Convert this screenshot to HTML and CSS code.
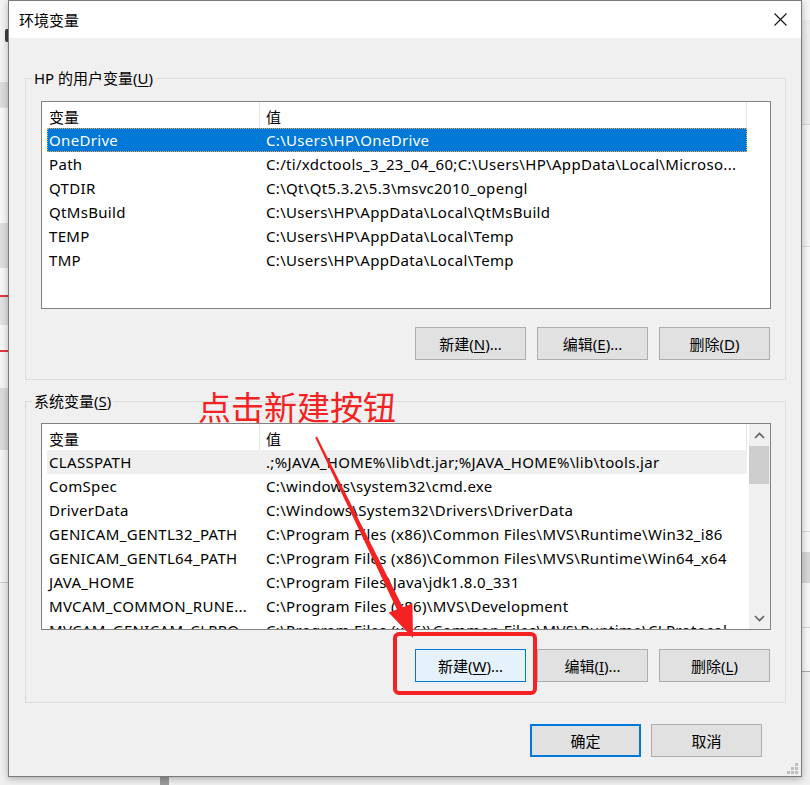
FILE: index.html
```html
<!DOCTYPE html>
<html lang="zh-CN">
<head>
<meta charset="utf-8">
<title>环境变量</title>
<link rel="stylesheet" href="styles.css">
</head>
<body>
<div class="screen">
  <div class="side side-left">
    <div class="sl sl-a"><span class="stub-icon"></span></div>
    <div class="sl sl-b"></div>
    <div class="sl sl-c"></div>
    <div class="sl sl-d"></div>
    <div class="sl sl-e"></div>
    <div class="sl sl-red"></div>
    <div class="sl sl-f"></div>
    <div class="sl sl-g"></div>
    <div class="sl sl-red"></div>
    <div class="sl sl-h"></div>
    <div class="sl sl-i"></div>
    <div class="sl sl-j"></div>
    <div class="sl sl-k"></div>
  </div>

  <div class="center">
    <div class="dialog">
      <div class="titlebar">
        <span class="title">环境变量</span>
        <span class="close">
          <svg width="13" height="13" viewBox="0 0 13 13"><path d="M0.5 0.5 L12.5 12.5 M12.5 0.5 L0.5 12.5" stroke="#111" stroke-width="1.1" fill="none"/></svg>
        </span>
      </div>

      <div class="body">
        <fieldset class="group group-user">
          <legend>HP 的用户变量(<u>U</u>)</legend>
          <div class="list list-user">
            <div class="list-main">
              <div class="list-head">
                <div class="hcol h1">变量</div>
                <div class="hcol h2">值</div>
              </div>
              <div class="row selected"><div class="cell c1">OneDrive</div><div class="cell c2">C:\Users\HP\OneDrive</div></div>
              <div class="row"><div class="cell c1">Path</div><div class="cell c2">C:/ti/xdctools_3_23_04_60;C:\Users\HP\AppData\Local\Microso...</div></div>
              <div class="row"><div class="cell c1">QTDIR</div><div class="cell c2">C:\Qt\Qt5.3.2\5.3\msvc2010_opengl</div></div>
              <div class="row"><div class="cell c1">QtMsBuild</div><div class="cell c2">C:\Users\HP\AppData\Local\QtMsBuild</div></div>
              <div class="row"><div class="cell c1">TEMP</div><div class="cell c2">C:\Users\HP\AppData\Local\Temp</div></div>
              <div class="row"><div class="cell c1">TMP</div><div class="cell c2">C:\Users\HP\AppData\Local\Temp</div></div>
            </div>
          </div>
          <div class="btns">
            <button class="btn">新建(<u>N</u>)...</button>
            <button class="btn">编辑(<u>E</u>)...</button>
            <button class="btn">删除(<u>D</u>)</button>
          </div>
        </fieldset>

        <fieldset class="group group-sys">
          <legend>系统变量(<u>S</u>)</legend>
          <div class="list list-sys">
            <div class="list-main">
              <div class="list-head">
                <div class="hcol h1">变量</div>
                <div class="hcol h2">值</div>
              </div>
              <div class="row hover"><div class="cell c1">CLASSPATH</div><div class="cell c2">.;%JAVA_HOME%\lib\dt.jar;%JAVA_HOME%\lib\tools.jar</div></div>
              <div class="row"><div class="cell c1">ComSpec</div><div class="cell c2">C:\windows\system32\cmd.exe</div></div>
              <div class="row"><div class="cell c1">DriverData</div><div class="cell c2">C:\Windows\System32\Drivers\DriverData</div></div>
              <div class="row"><div class="cell c1">GENICAM_GENTL32_PATH</div><div class="cell c2">C:\Program Files (x86)\Common Files\MVS\Runtime\Win32_i86</div></div>
              <div class="row"><div class="cell c1">GENICAM_GENTL64_PATH</div><div class="cell c2">C:\Program Files (x86)\Common Files\MVS\Runtime\Win64_x64</div></div>
              <div class="row"><div class="cell c1">JAVA_HOME</div><div class="cell c2">C:\Program Files\Java\jdk1.8.0_331</div></div>
              <div class="row"><div class="cell c1">MVCAM_COMMON_RUNE...</div><div class="cell c2">C:\Program Files (x86)\MVS\Development</div></div>
              <div class="row"><div class="cell c1">MVCAM_GENICAM_CLPRO...</div><div class="cell c2">C:\Program Files (x86)\Common Files\MVS\Runtime\CLProtocol</div></div>
            </div>
            <div class="scrollbar">
              <div class="sb-btn">
                <svg width="11" height="7" viewBox="0 0 11 7"><path d="M1 6 L5.5 1.5 L10 6" stroke="#606060" stroke-width="1.6" fill="none"/></svg>
              </div>
              <div class="sb-track"><div class="sb-thumb"></div></div>
              <div class="sb-btn">
                <svg width="11" height="7" viewBox="0 0 11 7"><path d="M1 1 L5.5 5.5 L10 1" stroke="#606060" stroke-width="1.6" fill="none"/></svg>
              </div>
            </div>
          </div>
          <div class="btns">
            <button class="btn btn-hot">新建(<u>W</u>)...</button>
            <button class="btn">编辑(<u>I</u>)...</button>
            <button class="btn">删除(<u>L</u>)</button>
          </div>
        </fieldset>

        <div class="dialog-btns">
          <button class="btn btn-default">确定</button>
          <button class="btn">取消</button>
        </div>
      </div>

      <svg class="grip" width="12" height="12" viewBox="0 0 12 12">
        <rect x="8" y="0" width="3" height="3" fill="#bdbdbd"/>
        <rect x="4" y="4" width="3" height="3" fill="#bdbdbd"/>
        <rect x="8" y="4" width="3" height="3" fill="#bdbdbd"/>
        <rect x="0" y="8" width="3" height="3" fill="#bdbdbd"/>
        <rect x="4" y="8" width="3" height="3" fill="#bdbdbd"/>
        <rect x="8" y="8" width="3" height="3" fill="#bdbdbd"/>
      </svg>
    </div>
    <div class="below"><span class="below-bar"></span></div>
  </div>

  <div class="side side-right">
    <div class="sr sr-a"></div>
    <div class="sr sr-b"></div>
    <div class="sr sr-c"></div>
    <div class="sr sr-d"></div>
    <div class="sr sr-e"></div>
    <div class="sr sr-f"></div>
    <div class="sr sr-g"></div>
    <div class="sr sr-h"></div>
    <div class="sr sr-i"></div>
  </div>
</div>

<div class="note-text">点击新建按钮</div>
<div class="note-box"></div>
<svg class="note-arrow" width="810" height="785" viewBox="0 0 810 785">
  <polygon points="315.2,437.4 396.9,609.6 388.6,612.6 413,638 412.4,603.4 402.9,607.3 317,436.6" fill="#f42222"/>
</svg>
</body>
</html>
```

FILE: styles.css
```css
* { box-sizing: border-box; }

html, body {
  margin: 0;
  padding: 0;
}

body {
  width: 810px;
  height: 785px;
  overflow: hidden;
  position: relative;
  background: #f0f0f0;
  font-family: "Noto Sans", "Noto Sans CJK SC", sans-serif;
  font-size: 15px;
  color: #000;
}

.screen {
  display: flex;
  height: 785px;
}

/* ---------- background windows ---------- */
.side {
  display: flex;
  flex-direction: column;
}
.side-left { width: 8px; }
.side-right { flex: 1; }

.sl, .sr { flex: none; }
.sl-a { height: 82px; background: #f3f3f3; display: flex; justify-content: flex-end; padding-top: 29px; }
.stub-icon { width: 3px; height: 13px; background: #3d3d3d; border-radius: 2px 0 0 2px; }
.sl-b { height: 25px; background: #dcdcdc; }
.sl-c { height: 116px; background: #f8f8f8; border-top: 1px solid #e2e2e2; }
.sl-d { height: 45px; background: #dedede; }
.sl-e { height: 27px; background: #f8f8f8; }
.sl-red { height: 2px; background: #e23a3a; }
.sl-f { height: 28px; background: #e1e1e1; }
.sl-g { height: 25px; background: #f7f7f7; }
.sl-h { height: 36px; background: #f5f5f5; }
.sl-i { height: 62px; background: #dadada; }
.sl-j { height: 133px; background: #f3f3f3; border-bottom: 1px solid #c9c9c9; }
.sl-k { flex: 1; background: #efefef; }

.sr-a { height: 20px; background: #f5f5f5; }
.sr-b { height: 105px; background: #ececec; border-bottom: 1px solid #d6d6d6; }
.sr-c { height: 122px; background: #f4f4f4; border-bottom: 1px solid #dadada; }
.sr-d { height: 285px; background: #f6f6f6; border-bottom: 1px solid #d8d8d8; }
.sr-e { height: 20px; background: #f6f6f6; }
.sr-f { height: 31px; background: #d6d6d6; }
.sr-g { height: 45px; background: #f6f6f6; border-bottom: 1px solid #d2d2d2; }
.sr-h { height: 44px; background: #f7f7f7; border-bottom: 1px solid #a8a8a8; }
.sr-i { flex: 1; background: #f0f0f0; }

.center {
  width: 794px;
  display: flex;
  flex-direction: column;
}

.below {
  flex: 1;
  background: #f0f0f0;
  padding-left: 152px;
}
.below-bar {
  display: block;
  width: 9px;
  height: 100%;
  background: #9d9d9d;
}

/* ---------- dialog ---------- */
.dialog {
  position: relative;
  height: 777px;
  border: 1px solid #7a7a7a;
  background: #f0f0f0;
  box-shadow: 0 2px 7px rgba(0, 0, 0, 0.28);
  display: flex;
  flex-direction: column;
}

.titlebar {
  height: 37px;
  flex: none;
  background: #fff;
  display: flex;
  align-items: center;
  justify-content: space-between;
  padding-left: 10px;
}
.title { font-size: 15px; line-height: 20px; padding-top: 1px; }
.close {
  width: 41px;
  height: 37px;
  display: flex;
  align-items: center;
  justify-content: center;
}

.body {
  flex: 1;
  padding: 30px 15px 0 16px;
  display: flex;
  flex-direction: column;
}

.group {
  margin: 0;
  border: 1px solid #dcdcdc;
  padding: 13px 14px 19px 15px;
  min-width: 0;
}
.group legend {
  padding: 0 2px;
  margin-left: -9px;
  line-height: 20px;
  height: 20px;
}
.group-sys {
  margin-top: 11px;
  padding-top: 12px;
  padding-bottom: 20px;
}

u { text-decoration-thickness: 1px; text-underline-offset: 2px; }

/* list view */
.list {
  border: 1px solid #828282;
  background: #fff;
  display: flex;
  overflow: hidden;
}
.list-user { height: 208px; }
.list-sys { height: 207px; }

.list-main {
  flex: 1;
  min-width: 0;
  overflow: hidden;
}

.list-head {
  height: 26px;
  display: flex;
}
.hcol {
  padding-left: 7px;
  padding-top: 4px;
  line-height: 22px;
  border-right: 1px solid #e5e5e5;
}
.h1 { width: 218px; }
.h2 { width: 487px; padding-left: 6px; }

.row {
  display: flex;
  height: 24px;
  width: 700px;
  margin-left: 5px;
  line-height: 25px;
  white-space: nowrap;
  letter-spacing: 0.32px;
}
.cell { overflow: hidden; }
.c1 { width: 213px; padding-left: 2px; }
.c2 { flex: 1; padding-left: 6px; }

.row.selected {
  background: #0078d7;
  color: #fff;
  outline: 1px dotted #f0a850;
  outline-offset: -1px;
}
.row.hover { background: #efefef; }

/* scrollbar */
.scrollbar {
  width: 21px;
  flex: none;
  background: #f0f0f0;
  display: flex;
  flex-direction: column;
}
.sb-btn {
  height: 22px;
  display: flex;
  align-items: center;
  justify-content: center;
  flex: none;
}
.sb-track { flex: 1; }
.sb-thumb {
  height: 38px;
  margin: 0 1px 0 0;
  background: #cdcdcd;
}

/* buttons */
.btns {
  display: flex;
  justify-content: flex-end;
  gap: 11px;
  margin-top: 18px;
  padding-right: 1px;
}
.group-sys .btns { margin-top: 19px; }

.btn {
  width: 111px;
  height: 33px;
  margin: 0;
  padding: 0;
  border: 1px solid #adadad;
  background: #e1e1e1;
  font-family: inherit;
  font-size: 15px;
  color: #000;
  line-height: 20px;
}
.btn-hot {
  background: #e5f1fb;
  border-color: #0078d7;
}
.btn-default {
  border: 2px solid #0078d7;
}

.dialog-btns {
  display: flex;
  justify-content: flex-end;
  gap: 10px;
  margin-top: 21px;
  padding-right: 24px;
}

.grip {
  position: absolute;
  right: 2px;
  bottom: 1px;
}

/* ---------- annotation overlay ---------- */
.note-text {
  position: absolute;
  left: 198px;
  top: 390px;
  font-family: "Noto Sans CJK SC", sans-serif;
  font-size: 33px;
  line-height: 33px;
  color: #f42222;
  white-space: nowrap;
}
.note-box {
  position: absolute;
  left: 393px;
  top: 632px;
  width: 144px;
  height: 63px;
  border: 4px solid #f42222;
  border-radius: 6px;
}
.note-arrow {
  position: absolute;
  left: 0;
  top: 0;
  pointer-events: none;
}
```
